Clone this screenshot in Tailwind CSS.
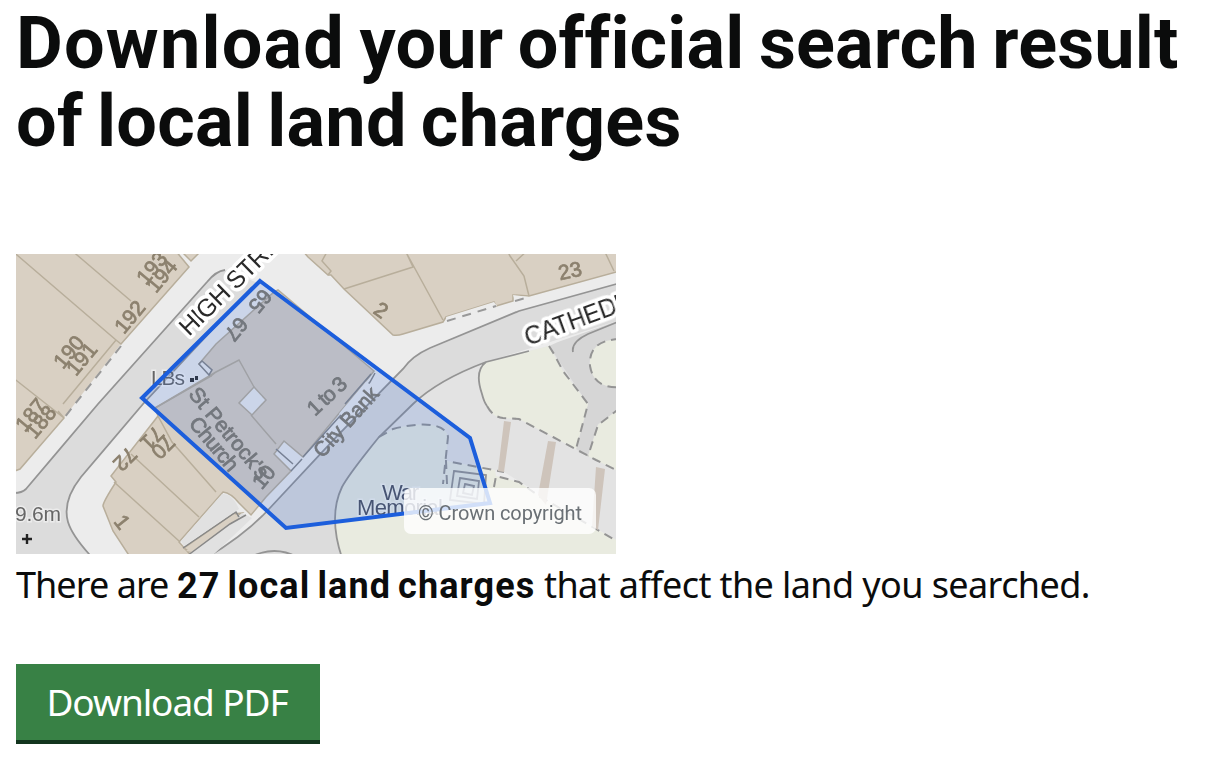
<!DOCTYPE html>
<html lang="en">
<head>
<meta charset="utf-8">
<title>Download your official search result</title>
<script src="https://cdn.jsdelivr.net/npm/@tailwindcss/browser@4"></script>
</head>
<body class="bg-white text-[#0b0c0c] font-['Noto_Sans',sans-serif]">
<main class="h-[760px] overflow-hidden px-4 pt-[5px]">
  <h1 class="font-['Roboto',sans-serif] text-[72px] leading-[78px] font-bold whitespace-nowrap"><span class="block tracking-[0.15px] [word-spacing:-3.5px]"><span class="tracking-[1.2px]">Download</span> your official search result</span><span class="block tracking-[0.25px] [word-spacing:-4px]">of local land charges</span></h1>
  <div class="relative mt-[93px] h-[300px] w-[600px] overflow-hidden">
    <svg class="block h-[300px] w-[600px]" viewBox="16 254 600 300" fill="none" font-family="Liberation Sans, sans-serif">
      <defs><filter id="soft" x="0" y="0" width="1" height="1"><feGaussianBlur stdDeviation="0.6"/></filter></defs>
      <g filter="url(#soft)">
      <path fill="#ececec" d="M10 248h612v312H10z"/>
      <!-- roads -->
      <g stroke="#949494" stroke-width="1.8">
        <path fill="#dcdcdc" stroke="none" d="M225 270Q216 271 207 282L98 404 26 489 16 493V560H93L89 554Q72 535 68 522Q62 501 81 477L143 404 258 283Z"/>
        <path d="M225 270Q216 271 207 282L98 404 26 489Q22 493 14 493M92 558L89 554Q72 535 68 522Q62 501 81 477L143 404 252 287"/>
        <path fill="#dcdcdc" stroke="none" d="M620 283L519 311 416 355 403 369 339 434 269 509Q245 535 206 558H345Q334 530 335 510Q337 490 352 471L379 437 413 404Q438 380 486 362L620 320Z"/>
        <path d="M620 283L519 311 430 348Q412 356 403 369L339 434 269 509Q245 535 206 558"/>
      </g>
      <!-- plaza, lawns and paths -->
      <path fill="#e3e3e3" d="M486 362Q438 380 413 404L379 437 420 425 447 434 446 461 504 472 620 543V345L549 346Z"/>
      <path fill="#e9ebe0" d="M379 437L393 429Q420 422 436 426Q447 429 448 437L443 484 447 461 495 470 496 476 519 482 539 496 596 529 622 543V560H341Q331 514 340 492Q346 480 379 437Z"/>
      <path fill="#d6d6d6" d="M549 346L558 342 620 320V348Q585 345 590 370Q600 387 620 387V409L598 424 588 457 576 449 588 404Z"/>
      <g fill="#e9ebe0">
        <path d="M486 362Q474 371 482 394Q488 417 503 418L519 419 553 437 576 449 588 404 563 371 549 346 529 351Z"/>
        <path d="M620 339Q588 340 590 366Q594 389 620 387Z"/><path d="M620 408L598 425 588 456 620 472Z"/>
      </g>
      <g stroke="#949494" stroke-width="1.8">
        <path d="M529 351L486 362Q438 380 413 404L379 437Q349 474 342 487Q328 516 342 558M486 362Q474 371 482 394Q484 402 487 406M573 352Q571 342 588 334L620 321"/>
        <g stroke-width="2" stroke-dasharray="9 6"><path d="M379 437L393 429Q420 422 436 426Q447 429 448 437L443 484M447 484L446 461 504 472M494 487L496 476 519 482 539 496 596 529 620 543M487 406Q493 417 503 418L519 419 553 437 596 460 620 472M549 346L554 354 563 371 588 404 576 449M620 339Q588 340 590 366Q594 389 620 387M620 408L598 425 588 456"/></g>
        <path d="M454 471L486 475 484 504 450 500ZM460 478L479 481 477 499 457 496ZM465 484L474 486 472 495 463 493Z"/>
        <path d="M250 557Q275 545 297 557"/>
      </g>
      <path fill="#cec4bb" d="M504 421L511 422 504 472 498 471ZM548 441L556 442 546 505 538 495ZM596 467L605 469 598 530 592 526Z"/>
      <!-- buildings -->
      <g fill="#d9d0c3" stroke="#b8ae9b" stroke-width="1.5">
        <path stroke="none" d="M10 248H173L189 267 121 344 76 402 64 418 20 469 10 474Z"/>
        <path fill="none" d="M175 250L189 267 121 344 116 340 63 404M58 411L64 418 20 469 12 472M10 249L116 340M70 249L131 301M12 377L64 418"/>
        <path d="M180 250L191 261 202 250Z"/>
        <path d="M302 250L308 257 328 275 331 275 344 289 393 335Q397 336 403 334L443 322 446 317 494 302 496 306 513 301 513 295 529 296 620 271V250Z"/>
        <path fill="none" d="M328 250L322 261 331 271 328 275M344 289L413 267 405 250M407 254L443 320M507 250L510 256 524 276 529 296M516 261L528 250M604 250L614 271"/>
        <path d="M274 292L278 290 374 371 303 457 284 441 274 454 291 471 266 497 251 515 239 503Q231 493 223 492L179 542 195 560H132L113 531 103 506Q103 502 116 482L111 476 158 416 155 408 211 376 199 364 216 344Z"/>
        <path fill="none" d="M158 416L172 442 216 492M131 454L199 517M114 482L179 541M155 408L216 372 239 360 254 387M211 376L216 372M251 415L276 444"/>
        <path fill="#ececec" d="M254 387L266 400 252 415 239 403Z"/>
        <path fill="#ececec" stroke="#888" d="M199 364L202 361 212 370 209 375Z"/>
        <path d="M184 548L233 514 242 513 225 526 190 552Z"/>
      </g>
      <path fill="#ececec" d="M446 317L494 302 497 306 447 321ZM513 295L529 297 515 301Z"/>
      <path fill="#e1e1e1" d="M181 541L222 494Q230 493 236 503L239 509 184 546ZM187 556L242 513 252 518 212 556Z"/>
      <path fill="#d9d0c3" d="M186 551L234 514 239 518 192 552Z"/>
      <g stroke="#888" stroke-width="1.5"><path d="M183 548L236 512 239 517M187 556L230 524 246 515"/><path d="M276 449L293 464M291 471L302 459M371 374L345 404M375 373L370 382 340 416 303 457"/></g>
      <path stroke="#999" stroke-width="2" stroke-dasharray="9 7" d="M121 346L64 418M447 321L496 306M515 301L529 297"/>
      <path stroke="#ececec" stroke-width="5" d="M368 383L341 415"/>
      <!-- house numbers and place names -->
      <g fill="#8c816e" stroke="#8c816e" stroke-width=".8" font-size="21" text-anchor="middle">
        <g transform="translate(152 268) rotate(-50)"><text y="7">193</text></g><g transform="translate(162 276) rotate(-50)"><text y="7">194</text></g>
        <g transform="translate(130 317) rotate(-50)"><text y="7">192</text></g><g transform="translate(69 352) rotate(-50)"><text y="7">190</text></g><g transform="translate(82 359) rotate(-50)"><text y="7">191</text></g>
        <g transform="translate(31 415) rotate(-50)"><text y="7">187</text></g><g transform="translate(41 422) rotate(-50)"><text y="7">188</text></g>
        <g transform="translate(381 310) rotate(35)"><text y="7">2</text></g><g transform="translate(570 271) rotate(-12)"><text y="7">23</text></g>
        <g transform="translate(125 459) rotate(135)"><text y="7">72</text></g><g transform="translate(152 438) rotate(135)"><text y="7">71</text></g><g transform="translate(163 447) rotate(135)"><text y="7">70</text></g>
        <g transform="translate(122 522) rotate(52)"><text y="7">1</text></g>
      </g>
      <g fill="#837c6c" stroke="#837c6c" stroke-width=".8" font-size="21" text-anchor="middle">
        <g transform="translate(260 301) rotate(130)"><text y="7">65</text></g><g transform="translate(236 329) rotate(130)"><text y="7">67</text></g>
        <g transform="translate(327 396) rotate(-43)"><text y="7" textLength="46">1 to 3</text></g><g transform="translate(264 477) rotate(-50)"><text y="7">10</text></g>
        <g transform="translate(229 433) rotate(50)"><text y="7" textLength="112" lengthAdjust="spacingAndGlyphs">St Petrock's</text></g>
        <g transform="translate(214 444) rotate(50)"><text y="7" textLength="64">Church</text></g>
        <g transform="translate(346 422) rotate(-48)"><text y="7" textLength="86" lengthAdjust="spacingAndGlyphs">City Bank</text></g>
      </g>
      <g fill="#666" stroke="#fff" stroke-opacity=".45" stroke-width="3" paint-order="stroke" font-size="21"><text x="151" y="385" textLength="34">LBs</text><text x="15" y="521" textLength="46">9.6m</text></g>
      <path fill="#333" d="M190 378h4v4h-4zM195 376h3v4h-3z"/><path stroke="#222" stroke-width="2.4" d="M22 539H32M27 534V544"/>
      <g fill="#4f5360" stroke="#fff" stroke-opacity=".4" stroke-width="3" paint-order="stroke" font-size="22"><text x="382" y="500" textLength="37">War</text><text x="357" y="515" textLength="86">Memorial</text></g>
      <g fill="#2b2b2b" stroke="#fff" stroke-width="7" stroke-linejoin="round" paint-order="stroke" font-size="25"><text transform="translate(189 337) rotate(-44.5)" textLength="161">HIGH STREET</text><text transform="translate(528 346) rotate(-20)" textLength="212">CATHEDRAL YARD</text></g>
      </g>
      <path fill="#1c5edc" fill-opacity=".16" stroke="#1c5edc" stroke-width="4" d="M260 281L470 438 490 503 286 528 142 398Z"/>
    </svg>
    <div class="absolute top-[234px] left-[388px] flex h-[46px] w-[192px] items-center justify-center rounded-[7px] bg-white/80 pt-1 font-['Roboto',sans-serif] text-[20px] tracking-[-0.1px] whitespace-nowrap text-[#6a7075]">© Crown copyright</div>
  </div>
  <p class="mt-[6px] text-[36px] leading-[50px] whitespace-nowrap"><span class="tracking-[-0.95px]">There are </span><strong class="font-['Roboto',sans-serif] font-bold tracking-[1.1px] [word-spacing:-3px]">27 local land charges</strong><span class="tracking-[-0.6px]"> that affect the land you searched.</span></p>
  <button class="mt-[53px] block h-20 w-[304px] border-b-4 border-[#12351e] bg-[#388145] pr-[2px] text-[37px] leading-[76px] tracking-[-1.1px] whitespace-nowrap text-white">Download PDF</button>
</main>
</body>
</html>
